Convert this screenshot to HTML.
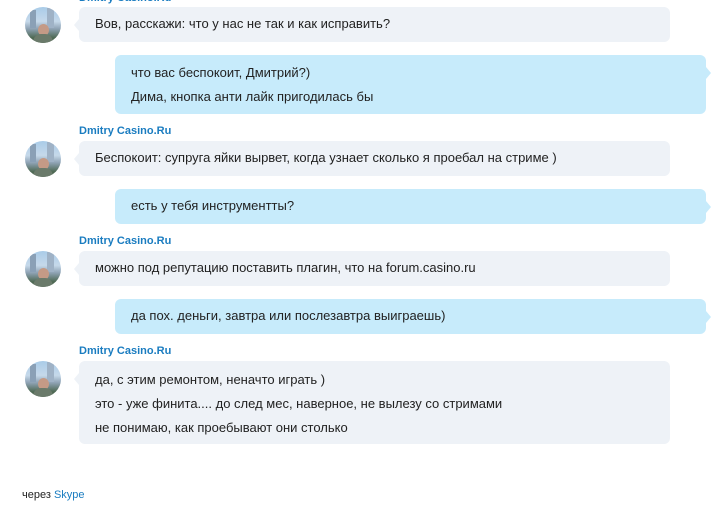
<!DOCTYPE html>
<html><head><meta charset="utf-8"><style>
html,body{margin:0;padding:0;background:#fff;width:720px;height:506px;overflow:hidden;position:relative;font-family:"Liberation Sans","DejaVu Sans",sans-serif;font-size:13px;color:#222}
.b{position:absolute;border-radius:6px}
.l{background:#eef2f7;left:79px;width:591px}
.r{background:#c7ebfb;left:115px;width:591px}
.l:before{content:"";position:absolute;left:-5px;top:12px;border-top:6px solid transparent;border-bottom:6px solid transparent;border-right:5px solid #eef2f7}
.r:after{content:"";position:absolute;right:-5px;top:12px;border-top:6px solid transparent;border-bottom:6px solid transparent;border-left:5px solid #c7ebfb}
.t{position:absolute;white-space:nowrap}
.n{position:absolute;left:79px;color:#1a7cc0;font-weight:bold;font-size:11px}
.a{position:absolute;left:25px;width:36px;height:36px;border-radius:50%;overflow:hidden;background:linear-gradient(180deg,#a9cbe8 0%,#c6d9ea 40%,#8fa3b5 60%,#4f6a55 85%,#3f5a44 100%)}
.a i{position:absolute;left:13px;top:17px;width:11px;height:12px;border-radius:50%;background:#c49a86}
.a s{position:absolute;left:8px;top:27px;width:20px;height:12px;border-radius:8px 8px 0 0;background:#6a7a6a}
.a b{position:absolute;left:5px;top:3px;width:6px;height:18px;background:#8aa0b6}
.a u{position:absolute;left:22px;top:1px;width:7px;height:20px;background:#9fb2c6}
</style></head><body>
<div class="n" style="top:-8px">Dmitry Casino.Ru</div>
<div class="a" style="top:7px"><b></b><u></u><i></i><s></s></div>
<div class="b l" style="top:7px;height:35px"><span class="t" style="left:16px;top:9px">Вов, расскажи: что у нас не так и как исправить?</span></div>

<div class="b r" style="top:55px;height:59px"><span class="t" style="left:16px;top:10px">что вас беспокоит, Дмитрий?)</span><span class="t" style="left:16px;top:34px">Дима, кнопка анти лайк пригодилась бы</span></div>

<div class="n" style="top:125px">Dmitry Casino.Ru</div>
<div class="a" style="top:141px"><b></b><u></u><i></i><s></s></div>
<div class="b l" style="top:141px;height:35px"><span class="t" style="left:16px;top:9px">Беспокоит: супруга яйки вырвет, когда узнает сколько я проебал на стриме )</span></div>

<div class="b r" style="top:189px;height:35px"><span class="t" style="left:16px;top:9px">есть у тебя инструментты?</span></div>

<div class="n" style="top:235px">Dmitry Casino.Ru</div>
<div class="a" style="top:251px"><b></b><u></u><i></i><s></s></div>
<div class="b l" style="top:251px;height:35px"><span class="t" style="left:16px;top:9px">можно под репутацию поставить плагин, что на forum.casino.ru</span></div>

<div class="b r" style="top:299px;height:35px"><span class="t" style="left:16px;top:9px">да пох. деньги, завтра или послезавтра выиграешь)</span></div>

<div class="n" style="top:345px">Dmitry Casino.Ru</div>
<div class="a" style="top:361px"><b></b><u></u><i></i><s></s></div>
<div class="b l" style="top:361px;height:83px"><span class="t" style="left:16px;top:11px">да, с этим ремонтом, неначто играть )</span><span class="t" style="left:16px;top:35px">это - уже финита.... до след мес, наверное, не вылезу со стримами</span><span class="t" style="left:16px;top:59px">не понимаю, как проебывают они столько</span></div>

<div class="t" style="left:22px;top:489px;font-size:11px">через <span style="color:#1a7cc0">Skype</span></div>
</body></html>
